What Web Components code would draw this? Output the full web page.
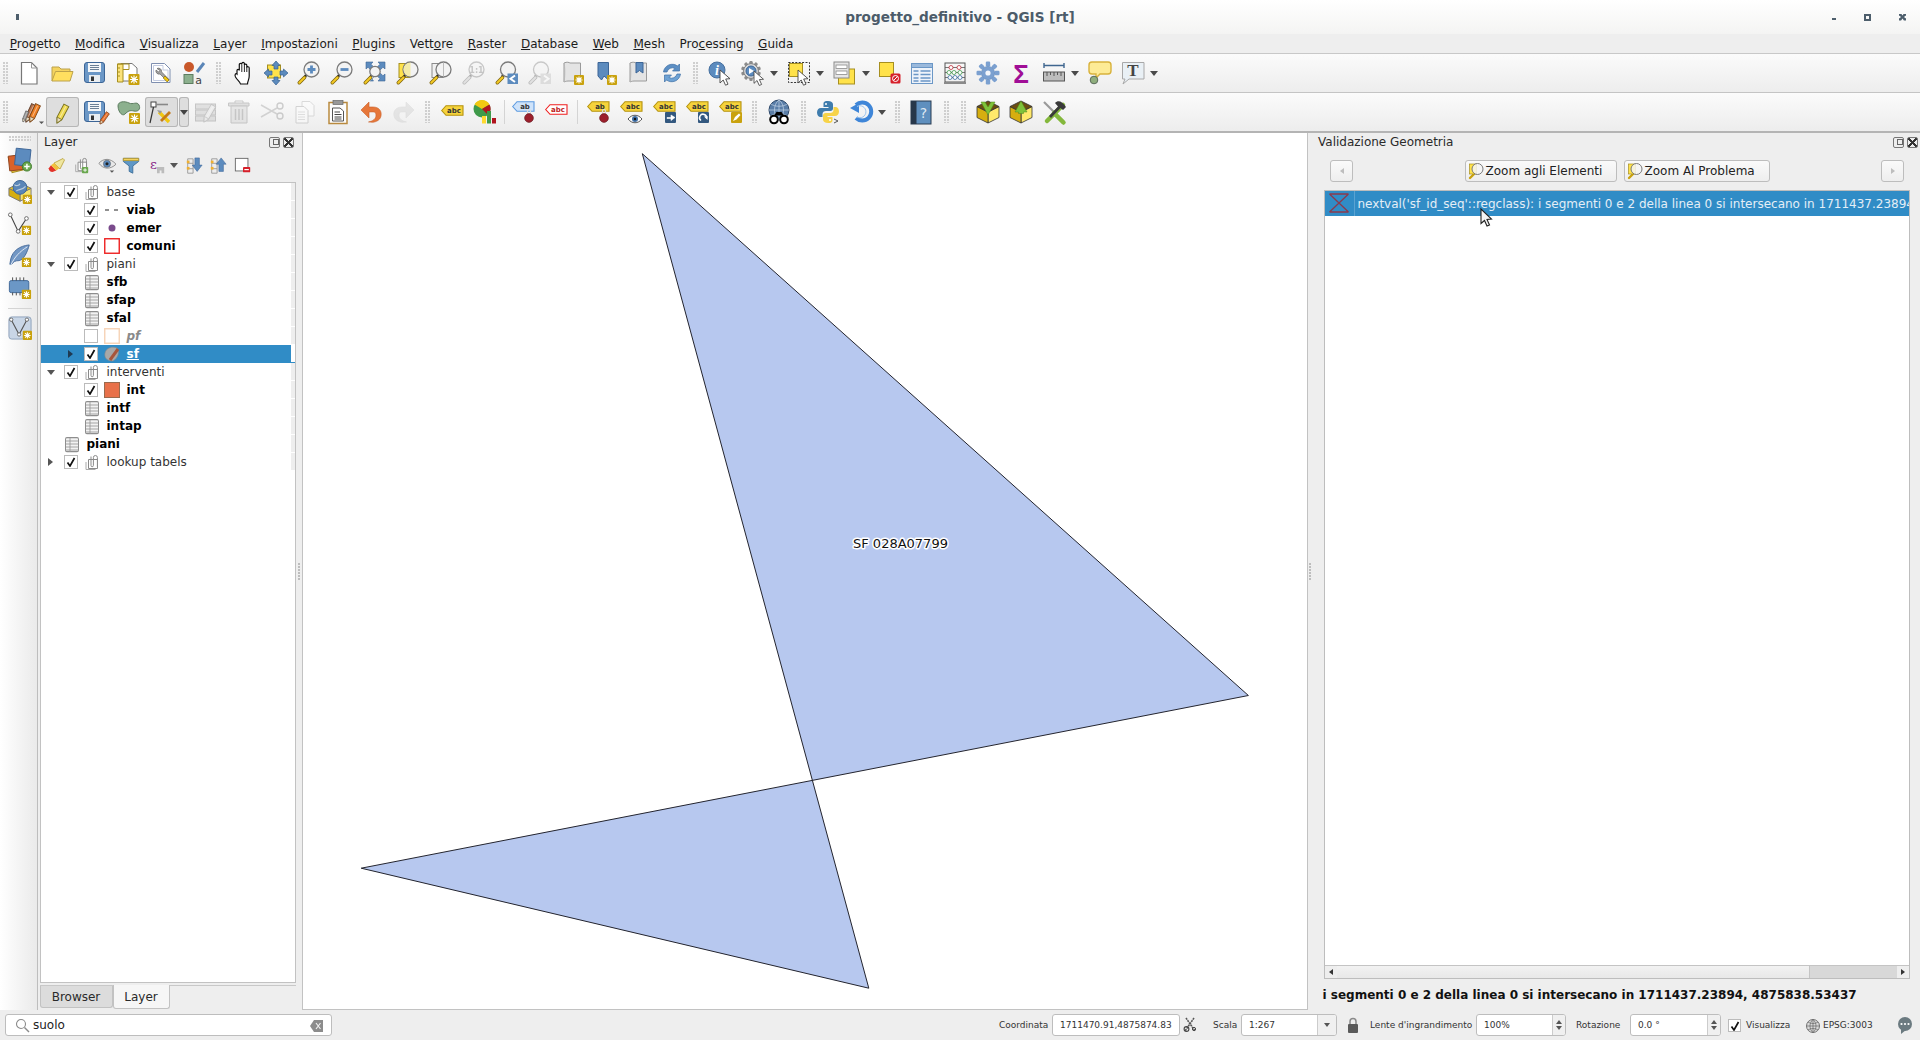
<!DOCTYPE html>
<html lang="it">
<head>
<meta charset="utf-8">
<title>progetto_definitivo - QGIS [rt]</title>
<style>
  html, body { margin: 0; padding: 0; background: #eee; overflow: hidden; }
  body { font: 12px "DejaVu Sans", sans-serif; color: #222; }
</style>
</head>
<body>
<qgis-app></qgis-app>
<script>
// icon parts
const B = 'fill="none"';
const badge = (x = 14, y = 14, s = 10) => {
  const c = s / 2;
  return `<g transform="translate(${x} ${y})"><rect width="${s}" height="${s}" rx="1" fill="#c9a20e"/>
    <g stroke="#fff" stroke-width="1.1"><path d="M${c} 1.5V${s - 1.5}M1.5 ${c}H${s - 1.5}M2.5 2.5L${s - 2.5} ${s - 2.5}M${s - 2.5} 2.5L2.5 ${s - 2.5}"/></g><circle cx="${c}" cy="${c}" r="1.7" fill="#fff"/></g>`;
};
const lens = (x = 14.5, y = 8.5, r = 7.5, inner = '', fill = '#f3f3f3') => `
  <path d="M${x - r * .7} ${y + r * .7}L7.5 16.5" stroke="#222" stroke-width="2.4"/>
  <path d="M7.5 16.5L2.3 21.7" stroke="#7d6510" stroke-width="3.6" stroke-linecap="round"/>
  <path d="M7.5 16.5L2.3 21.7" stroke="#f4c924" stroke-width="2" stroke-linecap="round"/>
  <circle cx="${x}" cy="${y}" r="${r}" fill="${fill}" stroke="#7b7b7b" stroke-width="1.3"/>${inner}`;
const cursor = (x, y, s = 1) => `<path transform="translate(${x} ${y}) scale(${s})" d="M0 0V13L3.2 10 5.5 15.2 8 14.2 5.7 9 10 8.7Z" fill="#fff" stroke="#444" stroke-width=".9"/>`;
const pencil = (x, y, a, col, dark, s = 1) => `<g transform="translate(${x} ${y}) rotate(${a}) scale(${s})"><path d="M-2.6 -19H2.6V-5L0 0-2.6-5Z" fill="${col}" stroke="${dark}" stroke-width=".9"/><path d="M-2.6 -5L0 0 2.6 -5Z" fill="#e8dcc0" stroke="${dark}" stroke-width=".7"/><path d="M0 -18V-6" stroke="#fff" stroke-opacity=".45"/></g>`;
const floppy = `<rect x="1.5" y="1.5" width="20" height="20" rx="2.5" fill="#6b97c6" stroke="#3c6596"/><rect x="5" y="2" width="13" height="9" fill="#f4f6f8"/><path d="M7 4.5h9M7 6.5h9M7 8.5h9" stroke="#6b7f95"/><rect x="6" y="14" width="11" height="7" fill="#e9edf1"/><rect x="8" y="15.5" width="3" height="4.5" fill="#333"/>`;
const tag = (col, line, txt, x = 0, y = 0, tc = '#333', w = 20) => `<g transform="translate(${x} ${y})"><path d="M.7 5.5L5 .7H${w}V10.3H5Z" fill="${col}" stroke="${line}" stroke-width="1.1"/><text x="${(w + 4) / 2}" y="8.3" text-anchor="middle" font-family="DejaVu Sans" font-weight="bold" font-size="7" fill="${tc}">${txt}</text></g>`;
const pin = (x, y) => `<path d="M${x - 1.5} ${y - 3}v-4a1.5 1.5 0 0 1 3 0v4" ${B} stroke="#ddd" stroke-width="1.2"/><circle cx="${x}" cy="${y}" r="4.4" fill="#9c1f2c" stroke="#5e121a" stroke-width=".6"/>`;
const scroll = (f = '#e4e4e4') => `<path d="M3 2c3-1.4 5-.6 6 0h10.5V20H7c-2 0-4 1-4 1Z" fill="${f}" stroke="#9a9a9a"/><path d="M3 2c1 3 1 15 0 19" ${B} stroke="#b8b8b8"/>`;
const gearTeeth = (cx, cy, r, n, w, col) => Array.from({ length: n }, (_, i) => `<rect x="${cx - w / 2}" y="${cy - r}" width="${w}" height="5" rx="1.2" fill="${col}" transform="rotate(${i * 360 / n} ${cx} ${cy})"/>`).join('');
const box = (head) => `<path d="M12 12L23 6.5V17.5L12 23Z" fill="#ffe96b" stroke="#333" stroke-width=".8"/><path d="M12 12L1 6.5V17.5L12 23Z" fill="#d6ae10" stroke="#333" stroke-width=".8"/><path d="M12 1L1 6.5 12 12 23 6.5Z" fill="#6b4d11" stroke="#333" stroke-width=".8"/>${head}`;
const groupIc = `<path d="M4.5 5.5h9v9h-9z" fill="#fff" stroke="#8a8a8a"/><path d="M7 2.5V11.5a1.2 1.2 0 0 0 2.4 0V3.5a2 2 0 0 1 4 0V13" ${B} stroke="#8a8a8a"/><path d="M2 8v7.5h9.5" ${B} stroke="#aaa"/>`;
const tableIc = `<rect x="1.5" y="1.5" width="13" height="13" rx="1.4" fill="#f2f2f2" stroke="#8e8e8e" transform="scale(1 1.08)"/><path d="M2 5h12M2 8h12M2 11h12M2 14h12M6 2v14" stroke="#9b9b9b" stroke-width=".9" ${B}/>`;

const ICONS = {
  new: `<path d="M4.5 1.5H14.5L20 7V23H4.5Z" fill="#fff" stroke="#777" stroke-width="1.2"/><path d="M14.5 1.5V7H20" ${B} stroke="#999"/>`,
  open: `<path d="M2 20V6h7l2 2h9v3" fill="#f4d35f" stroke="#bca24c"/><path d="M2 20L5.5 10.5H23L20 20Z" fill="#ffdf5f" stroke="#bca24c"/>`,
  save: floppy,
  layout: `<path d="M5 2.5H16L21 7V20H5Z" fill="#fff" stroke="#777"/><path d="M1.5 3H7V21H1.5Z" fill="#fbe27a" stroke="#a68f20"/><path d="M1.5 3H13V8.5H7" ${B} stroke="#a68f20"/><path d="M2 7h2M2 11h2M2 15h2" stroke="#a68f20"/>${badge(12.5, 13, 11)}`,
  manager: `<path d="M2.5 2.5H15.5L21 8V21.5H2.5Z" fill="#fff" stroke="#7f8fb0"/><path d="M4.5 4.5H14V9H19V19.5H4.5Z" ${B} stroke="#c3cbe0"/><path d="M8 7.5a3.2 3.2 0 0 1 4.6 3.4L20 18.5 18.5 20.5 11 13a3.2 3.2 0 0 1-4-4L9.5 11 11 9.5Z" fill="#a3a3a3" stroke="#555" stroke-width=".6"/><path d="M16 15l4 4-1.8 2-4-4Z" fill="#f2c811" stroke="#75600f" stroke-width=".6"/>`,
  style: `<circle cx="7" cy="6" r="5" fill="#c9582a"/><path d="M15 11L22 2" stroke="#5b86b8" stroke-width="3"/><rect x="2" y="13.5" width="9" height="9" fill="#8cb08e" stroke="#5d7d60"/><text x="16.5" y="22.5" text-anchor="middle" font-family="DejaVu Sans" font-size="11" fill="#444">a</text>`,
  pan: `<path d="M6 13V9.5C6 8 8 8 8.3 9.5V3.6C8.3 2 10.6 2 10.8 3.6V2.6C11 1 13.2 1 13.4 2.6V4C13.6 2.6 15.8 2.8 15.8 4.3V6.5C16 5.3 18.2 5.5 18.2 7V15C18.2 19 16.5 20 16.5 23H9.5C9 20.5 6.5 19.5 4.5 16 3.2 13.5 5 12 6 13Z" fill="#fff" stroke="#111" stroke-width="1.2"/><path d="M10.8 4V11M13.4 4V11M15.8 6V11" stroke="#111" stroke-width=".9"/>`,
  panto: `<rect x="3.5" y="4" width="13" height="13" fill="#ffe24a" stroke="#a68f20"/><g fill="#5c8bbe" stroke="#38618f" stroke-width=".7"><path d="M12 0L16 4.5H14V8H10V4.5H8Z"/><path d="M12 24L16 19.5H14V16H10V19.5H8Z"/><path d="M0 12L4.5 8V10H8V14H4.5V16Z"/><path d="M24 12L19.5 8V10H16V14H19.5V16Z"/></g>`,
  zoomin: lens(14.5, 8.5, 7.5, `<path d="M14.5 4.5V12.5M10.5 8.5H18.5" stroke="#5c8bbe" stroke-width="2.8"/>`),
  zoomout: lens(14.5, 8.5, 7.5, `<path d="M10.5 8.5H18.5" stroke="#5c8bbe" stroke-width="2.8"/>`),
  zoomfull: `<g fill="#5c8bbe" stroke="#3c6596" stroke-width=".6"><path d="M3 1H10L8 3.2 10.5 5.7 7.5 8.7 5 6.2 3 8Z"/><path d="M22 1H15L17 3.2 14.5 5.7 17.5 8.7 20 6.2 22 8Z"/><path d="M22 20H15L17 17.8 14.5 15.3 17.5 12.3 20 14.8 22 13Z"/><path d="M7 20H10.5L9 18 11 15.8"/></g>` + lens(12, 10.5, 5.2, '', '#f3f3f3'),
  zoomlayer: `<rect x="3" y="2.5" width="11" height="14" fill="#ffe24a" stroke="#a68f20"/>` + lens(14.5, 8.5, 7.5, `<path d="M14.5 1.5A7 7 0 0 0 14.5 15.5Z" fill="#f3eba8"/>`, '#f3f3f3'),
  zoomsel: `<rect x="3" y="2.5" width="11" height="14" fill="#f1f1f1" stroke="#8a8a8a"/>` + lens(14.5, 8.5, 7.5, `<path d="M14.5 1.5V15.5" stroke="#bbb"/>`, '#f3f3f3'),
  zoom11: lens(14.5, 8.5, 7.5, `<text x="14.5" y="11.6" text-anchor="middle" font-family="DejaVu Sans" font-weight="bold" font-size="8" fill="#777">1:1</text>`),
  zoomlast: lens(13, 8.5, 7.5) + `<rect x="12.5" y="12.5" width="10.5" height="10.5" fill="#5c8bbe"/><path d="M20 14.5L15.5 17.8 20 21" ${B} stroke="#fff" stroke-width="2"/>`,
  zoomnext: lens(13, 8.5, 7.5) + `<rect x="12.5" y="12.5" width="10.5" height="10.5" fill="#bbb"/><path d="M16 14.5L20.5 17.8 16 21" ${B} stroke="#fff" stroke-width="2"/>`,
  newmap: scroll() + badge(13, 14, 10),
  bookmark: `<path d="M4 1.5H14.5V19L10 15 7.5 19 4 15Z" fill="#5c8bbe" stroke="#3c6596"/>` + badge(13, 14, 10),
  showbm: scroll() + `<path d="M9 1.5H16V12L12.5 9.5 9 12Z" fill="#5c8bbe" stroke="#3c6596"/>`,
  refresh: `<path d="M3.5 11A8.8 8.8 0 0 1 17.5 5L19.5 3V10H12.5L15 7.5A5.5 5.5 0 0 0 7 11Z" fill="#5c8fc4" stroke="#3c6ea5" stroke-width=".7"/><path d="M20.5 13A8.8 8.8 0 0 1 6.5 19L4.5 21V14H11.5L9 16.5A5.5 5.5 0 0 0 17 13Z" fill="#6ea2d4" stroke="#3c6ea5" stroke-width=".7"/>`,
  identify: `<circle cx="9" cy="9" r="8" fill="#5c8bbe" stroke="#46709f"/><text x="9" y="14" text-anchor="middle" font-family="Liberation Serif" font-style="italic" font-weight="bold" font-size="14" fill="#fff">i</text>` + cursor(12, 9),
  action: gearTeeth(10, 10, 10, 10, 3.4, '#8c8c8c') + `<circle cx="10" cy="10" r="7.4" fill="#d9d9d9" stroke="#808080"/><circle cx="10" cy="10" r="5" fill="#5c8bbe" stroke="#3c6596"/><path d="M8 7L13 10 8 13Z" fill="#fff"/>` + cursor(13, 10, .95),
  select: `<rect x="1.5" y="1.5" width="21" height="20" ${B} stroke="#333" stroke-dasharray="2 1.4"/><rect x="2.5" y="2.5" width="13" height="13" fill="#ffe24a" stroke="#a68f20"/>` + cursor(11, 9),
  selattr: `<rect x="5.5" y="8" width="16" height="15" fill="#ffe24a" stroke="#a68f20"/><rect x="1" y="1" width="15" height="16" fill="#e6e6e6" stroke="#8a8a8a"/><rect x="3" y="4" width="11" height="3.5" fill="#fff" stroke="#8a8a8a" stroke-width=".8"/><rect x="3" y="10" width="11" height="3.5" fill="#fff" stroke="#8a8a8a" stroke-width=".8"/>`,
  deselect: `<rect x="1.5" y="1.5" width="14" height="14" fill="#ffe24a" stroke="#a68f20"/><rect x="12.5" y="12.5" width="10" height="10" rx="1.5" fill="#d6202b"/><circle cx="17.5" cy="17.5" r="3" ${B} stroke="#fff"/><path d="M15.5 19.5L19.5 15.5" stroke="#fff"/>`,
  table: `<rect x="1.5" y="2.5" width="21" height="20" fill="#eef3fa" stroke="#6b97c6"/><rect x="1.5" y="2.5" width="21" height="4" fill="#9ab9dc" stroke="#6b97c6"/><path d="M3.5 10h5M10.5 10h10M3.5 13.5h5M10.5 13.5h10M3.5 17h5M10.5 17h10M3.5 20h5M10.5 20h10" stroke="#6b97c6" stroke-width="1.3"/>`,
  abacus: `<rect x="2" y="2" width="20" height="19" ${B} stroke="#555"/><rect x="1" y="21" width="22" height="2" fill="#8a8a8a"/><path d="M2 6.5H22M2 11.5H22M2 16.5H22" stroke="#555" stroke-width=".8"/><g stroke-width=".8" fill="#fff"><circle cx="8" cy="6.5" r="2" stroke="#c0303a"/><circle cx="16" cy="6.5" r="2" stroke="#c0303a"/><circle cx="6" cy="11.5" r="2" stroke="#3f9a4a"/><circle cx="11" cy="11.5" r="2" stroke="#3f9a4a"/><circle cx="17" cy="11.5" r="2" stroke="#3f9a4a"/><circle cx="7" cy="16.5" r="2" stroke="#3c6ea5"/><circle cx="12" cy="16.5" r="2" stroke="#3c6ea5"/><circle cx="17" cy="16.5" r="2" stroke="#3c6ea5"/></g>`,
  gear: gearTeeth(12, 12, 11.5, 8, 4.4, '#7ba0d0') + `<circle cx="12" cy="12" r="6.6" fill="#7ba0d0" stroke="#5f88bb" stroke-width=".6"/><circle cx="12" cy="12" r="2.6" fill="#f3f6fb"/>`,
  sigma: `<text x="12" y="22" text-anchor="middle" font-family="Liberation Sans" font-weight="bold" font-size="26" fill="#a00e96">Σ</text>`,
  ruler: `<path d="M2 4.5H22M2 2V7M22 2V7" stroke="#3f668f" stroke-width="1.4"/><rect x="1.5" y="11" width="21" height="9" fill="#bdbdbd" stroke="#555"/><path d="M5 11v4M8.5 11v3M12 11v4M15.5 11v3M19 11v4" stroke="#555"/>`,
  annot: `<path d="M4 1H20C22 1 23 2 23 4V10C23 12 22 13 20 13H12L8 17V13H4C2 13 1 12 1 10V4C1 2 2 1 4 1Z" fill="#fdeb96" stroke="#d8b23c" stroke-width="1.4"/><circle cx="6" cy="19" r="3.8" fill="#8fae7d" stroke="#5a6b5a"/>`,
  ttext: `<path d="M1.5 1.5H23V18H8L2 23 4 18H1.5Z" fill="#e9f0f5" stroke="#a8a8a8"/><text x="12" y="14.5" text-anchor="middle" font-family="Liberation Serif" font-weight="bold" font-size="17" fill="#444">T</text>`,
  pencils: pencil(9, 22, 25, '#b5704a', '#5c3a26') + pencil(13, 22, 25, '#ef7f22', '#7a4213') + pencil(6, 22, 22, '#9a9a9a', '#555', .6) + `<path d="M22 21.5h5l-2.5 2.5Z" fill="#555"/>`,
  pencil: pencil(7, 23, 28, '#efd94f', '#77701f', 1.05),
  saveedits: floppy + pencil(17, 24, 35, '#e9702a', '#7a3a13', .72),
  addpoly: `<path d="M2 6C2 1 9 1 13 3S21 1 23 5 22 12 18 11 12 11 9 14 2 11 2 6Z" fill="#8cb08e" stroke="#5d7d60"/>` + badge(13, 13, 11),
  vertex: `<rect x="2" y="2" width="5" height="5" fill="#fff" stroke="#444"/><path d="M7 4.5H19" stroke="#888" stroke-width="1.6"/><path d="M4.5 7L1 23" stroke="#333" stroke-width="1.2"/><path d="M10 12L20 22" stroke="#f2c811" stroke-width="3.4"/><path d="M12 21L21 12" stroke="#c47b1a" stroke-width="2.8"/><path d="M8 10l5 1-2 3Z" fill="#999"/>`,
  modattr: `<rect x="1.5" y="4" width="20" height="5" fill="#bcbcbc" stroke="#777"/><rect x="1.5" y="10" width="20" height="5" fill="#bcbcbc" stroke="#777"/><rect x="1.5" y="16" width="20" height="5" fill="#bcbcbc" stroke="#777"/>` + pencil(10, 22, 30, '#ddd', '#777'),
  del: `<path d="M1.5 3H22V6H1.5Z" fill="#c9b5b5" stroke="#8b7777"/><path d="M8 3V1H16V3" ${B} stroke="#8b7777"/><path d="M4 6H20V23H4Z" fill="#d8c8c8" stroke="#8b7777"/><path d="M8.5 9V20M12 9V20M15.5 9V20" stroke="#8b7777" stroke-width="1.5"/>`,
  cut: `<path d="M1 5L17 14M1 17L17 8" stroke="#999" stroke-width="1.5"/><circle cx="20" cy="16" r="3" ${B} stroke="#888" stroke-width="1.4"/><circle cx="20" cy="6" r="3" ${B} stroke="#888" stroke-width="1.4"/>`,
  copy: `<path d="M9 1.5H17L21 5.5V16H9Z" fill="#fff" stroke="#aaa"/><path d="M3 6.5H11L15 10.5V23H3Z" fill="#fff" stroke="#999"/><path d="M5 12h7M5 14.5h7M5 17h7M5 19.5h7" stroke="#bbb"/>`,
  paste: `<rect x="3" y="2.5" width="18" height="21" fill="#fdfdfd" stroke="#b98a3f" stroke-width="1.5"/><rect x="7" y="0.5" width="10" height="4" fill="#999" stroke="#666" stroke-width=".7"/><path d="M6.5 8H14L17.5 11V21H6.5Z" fill="#fff" stroke="#555"/><path d="M8.5 12H14M8.5 14.5H15.5M8.5 17H15.5M8.5 19H15.5" stroke="#444"/>`,
  undo: `<path d="M2 10L10 2V7H14C20 7 23 11 22 16S15 23 11 22L9.5 22C14 21 17 19 17 15S14 12 10 12V18Z" fill="#e6773a" stroke="#c9602a" stroke-width=".6"/>`,
  redo: `<path d="M22 10L14 2V7H10C4 7 1 11 2 16S9 23 13 22L14.5 22C10 21 7 19 7 15S10 12 14 12V18Z" fill="#c9c9c9" stroke="#bbb" stroke-width=".6"/>`,
  abc: tag('#f6d33c', '#b5930f', 'abc', 1, 5, '#333', 22),
  diagram: `<circle cx="9" cy="9" r="8.5" fill="#3f9a4a"/><path d="M9 9L1.5 4.5A8.5 8.5 0 0 1 16.5 4.5Z" fill="#f2c811"/><path d="M9 9L16.5 4.5A8.5 8.5 0 0 1 15 15Z" fill="#b0141e"/><rect x="9" y="16" width="4" height="7.5" fill="#ffd92f"/><rect x="14" y="11" width="4" height="12.5" fill="#3f9a4a"/><rect x="19" y="18" width="4" height="5.5" fill="#b0141e"/>`,
  abpin: tag('#cfe3fa', '#5c9ae0', 'ab', 1, 1, '#333', 22) + pin(18, 18),
  abcred: tag('#fff', '#ef1f1f', 'abc', 1, 4, '#c01a1a', 22),
  abpiny: tag('#f6d33c', '#b5930f', 'ab', 1, 1, '#333', 22) + pin(18, 18),
  abceye: tag('#f6d33c', '#b5930f', 'abc', 1, 1, '#333', 22) + `<path d="M9 19C13 14 19 14 23 19 19 24 13 24 9 19Z" fill="#fff" stroke="#555"/><circle cx="16" cy="19" r="3" fill="#3f6ea5"/><circle cx="16" cy="19" r="1.2" fill="#111"/>`,
  abcarrow: tag('#f6d33c', '#b5930f', 'abc', 1, 1, '#333', 22) + `<rect x="13" y="12" width="11" height="11" rx="1" fill="#33587f"/><path d="M15 17.5H19V15L23 17.5 19 20.5V18.5H15Z" fill="#fff" stroke="#fff" stroke-width=".6"/>`,
  abcrotate: tag('#f6d33c', '#b5930f', 'abc', 1, 1, '#333', 22) + `<rect x="13" y="12" width="11" height="11" rx="1" fill="#33587f"/><path d="M16 20.5A3.5 3.5 0 1 1 21.5 18.5" ${B} stroke="#fff" stroke-width="1.5"/><path d="M19 16.5L22.5 20 22.5 16Z" fill="#fff"/>`,
  abcpen: tag('#f6d33c', '#b5930f', 'abc', 1, 1, '#333', 22) + `<rect x="13" y="12" width="11" height="11" rx="1" fill="#c9a20e"/><path d="M15 21L17 17 21 13.5 22.5 15 18.5 19.5Z" fill="#fff"/>`,
  globe: `<circle cx="12" cy="10" r="10" fill="#5a7ea8" stroke="#2f4a6b"/><path d="M2 10H22M12 0V20M4 4C8 7 16 7 20 4M4 16C8 13 16 13 20 16M12 0C6 4 6 16 12 20M12 0C18 4 18 16 12 20" ${B} stroke="#b9cbe0" stroke-width=".8"/><circle cx="7" cy="19.5" r="3.8" fill="#fff" stroke="#000" stroke-width="2"/><circle cx="17" cy="19.5" r="3.8" fill="#fff" stroke="#000" stroke-width="2"/><path d="M7 15.5L9.5 12H14.5L17 15.5Z" fill="#000"/>`,
  python: `<path d="M12 1C7 1 7.5 3 7.5 5V7H12.5V8H5C2.5 8 1 10 1 12.5S2.5 17 4.5 17H6.5V14C6.5 12 8 11 10 11H14.5C16 11 17 10 17 8.5V4.5C17 2.5 15 1 12 1Z" fill="#3f7cad"/><circle cx="10" cy="4" r="1" fill="#fff"/><path d="M12 23C17 23 16.5 21 16.5 19V17H11.5V16H19C21.5 16 23 14 23 11.5S21.5 7 19.5 7H17.5V10C17.5 12 16 13 14 13H9.5C8 13 7 14 7 15.5V19.5C7 21.5 9 23 12 23Z" fill="#f7d348"/><circle cx="14" cy="20" r="1" fill="#fff"/><path d="M18 19L22 21 18 23" ${B} stroke="#555"/>`,
  reload: `<path d="M7 18A9 9 0 1 0 7 5" ${B} stroke="#3f86d8" stroke-width="4"/><path d="M1 8L10 3 10 13Z" fill="#3f86d8"/><path d="M8 6.5A6 6 0 1 1 8 17" ${B} stroke="#9cc4ee" stroke-width="1"/>`,
  help: `<rect x="1" y="1" width="20" height="23" fill="#5f8fbe" stroke="#2b3d52"/><rect x="1" y="1" width="5.5" height="23" fill="#27374a"/><text x="13.5" y="17.5" text-anchor="middle" font-family="DejaVu Sans" font-size="14" fill="#dfe8f2">?</text>`,
  boxdown: box(`<path d="M5 2H9L12 7 15 2H19L12 15Z" fill="#7fc23a" stroke="#4f8a1e" stroke-width=".5"/>`),
  boxup: box(`<path d="M12 1L18 12H14.5V13.5H9.5V12H6Z" fill="#7fc23a" stroke="#4f8a1e" stroke-width=".5"/>`),
  tools: `<path d="M2 2L21 21" stroke="#9a9a9a" stroke-width="2.2"/><path d="M21 5L5 21" stroke="#84b83c" stroke-width="4.5" stroke-linecap="round"/><path d="M12 13L21.5 22.5" stroke="#84b83c" stroke-width="4.5" stroke-linecap="round"/><path d="M13 3C16 0 20 1 24 7L21 10 18.5 8 9 18 7 16 16 6.5Z" fill="#3a3a3a"/>`,
  addlayers: `<rect x="2" y="8" width="17" height="17" fill="#f2c13c" stroke="#a68f20" transform="rotate(-14 10 16)"/><rect x="1" y="8" width="16" height="16" fill="#d9622b" stroke="#8f4520" transform="rotate(-6 9 16)"/><rect x="8" y="1" width="16" height="18" fill="#5c8bbe" stroke="#3c6596" transform="rotate(6 16 10)"/><circle cx="20.5" cy="20" r="5" fill="#6aa84f" stroke="#3f7a2a"/><path d="M20.5 17V23M17.5 20H23.5" stroke="#fff" stroke-width="1.6"/>`,
  newgpkg: `<path d="M13 23L25 17V9L13 15Z" fill="#f7e36b" stroke="#777"/><path d="M13 23L1 17V9L13 15Z" fill="#d6ae10" stroke="#777"/><path d="M13 15L1 9 13 3 25 9Z" fill="#e8c428" stroke="#777"/><circle cx="13" cy="8" r="7.5" fill="#5a86b8" stroke="#3c6596"/><path d="M7 5C9 7 12 6 13 4M9 12C11 10 16 11 19 7" ${B} stroke="#bcd" stroke-width="1.3"/>` + badge(16, 16, 10),
  newvector: `<path d="M2.5 3L11 21 20 7" ${B} stroke="#444" stroke-width="1.2"/><circle cx="2.5" cy="3" r="2" fill="#fff" stroke="#666"/><circle cx="11" cy="21" r="2" fill="#fff" stroke="#666"/><circle cx="20" cy="7" r="2" fill="#fff" stroke="#666"/>` + badge(15, 15, 10),
  feather: `<path d="M23 1C12 2 5 8 3 16L2 22 4 22C6 19 8 18 12 18 17 17 21 9 23 1Z" fill="#7297c4" stroke="#44699a"/><path d="M3 23C7 14 13 8 21 3" ${B} stroke="#e8eef6"/>` + badge(15, 15, 10),
  memory: `<rect x="1.5" y="5" width="21" height="13" rx="2" fill="#6b97c6" stroke="#3c6596"/><path d="M5 1.5V5M9 1.5V5M13 1.5V5M17 1.5V5M5 18V21M9 18V21M13 18V21" stroke="#444"/>` + badge(15, 15, 10),
  virtual: `<rect x="1" y="1" width="24" height="24" rx="3" fill="#c9d6e6" stroke="#8ba0b8"/><path d="M3.5 4L12 20 20.5 4" ${B} stroke="#555" stroke-width="1.2"/><circle cx="12" cy="20" r="1.8" fill="#fff" stroke="#666"/><circle cx="3.5" cy="4" r="1.8" fill="#fff" stroke="#666"/><circle cx="20.5" cy="4" r="1.8" fill="#fff" stroke="#666"/>` + badge(16, 16, 10),
  brush: `<path d="M4 11L11 18 6 20C3 20 1 18 1 15Z" fill="#e2332a"/><path d="M8 8L20 2 22 4 16 16Z" fill="#efe6a0" stroke="#b39a2c"/><path d="M4 11L8 8 15 15 11 18Z" fill="#f2c13c"/>`,
  addgroup: `<g transform="translate(2 0) scale(1.05)">${groupIc}</g>` + `<rect x="11" y="11" width="7" height="7" rx="1" fill="#6aa84f"/><path d="M14.5 12.5V16.5M12.5 14.5H16.5" stroke="#fff"/>`,
  eye: `<path d="M1 7C6 1 14 1 20 8 14 14 6 14 1 7Z" fill="#e8e8e8" stroke="#888"/><circle cx="10" cy="7.5" r="4" fill="#5c8bbe" stroke="#555" stroke-width=".6"/><circle cx="10" cy="7.5" r="1.7" fill="#222"/><path d="M13 15h5l-2.5 2.5Z" fill="#555"/>`,
  filter: `<path d="M1.5 1.5H18.5V5L12 10V18L8 16V10L1.5 5Z" fill="#5f97c6" stroke="#3c6e9a"/><path d="M1.5 1.5H18.5V4H1.5Z" fill="#f4d35f" stroke="#b59a30"/>`,
  epsilon: `<text x="6" y="13" text-anchor="middle" font-family="DejaVu Serif" font-size="15" fill="#8b2a88">ε</text><path d="M10 11H18V18H15V15H13V18H10Z" fill="#bcbcbc"/>`,
  expand: `<path d="M3 2H9V18H3ZM3 7H9M3 13H9" ${B} stroke="#999"/><rect x="2" y="4" width="3" height="3" fill="#f0b030"/><rect x="2" y="11" width="3" height="3" fill="#f0b030"/><path d="M11 1H16V9H19L13.5 16 8 9H11Z" fill="#5c8bbe" stroke="#3c6596" stroke-width=".6"/>`,
  collapse: `<path d="M3 2H9V18H3ZM3 7H9M3 13H9" ${B} stroke="#999"/><rect x="2" y="4" width="3" height="3" fill="#f0b030"/><rect x="2" y="11" width="3" height="3" fill="#f0b030"/><path d="M11 16H16V8H19L13.5 1 8 8H11Z" fill="#5c8bbe" stroke="#3c6596" stroke-width=".6"/>`,
  removelayer: `<rect x="1.5" y="1.5" width="14" height="14" fill="#fff" stroke="#666"/><rect x="10" y="11" width="8" height="6" rx="1" fill="#d6202b"/><path d="M11.5 14H16.5" stroke="#fff" stroke-width="1.3"/>`,
  group: groupIc,
  layertable: tableIc,
  dash: `<path d="M1 8H5M10 8H14" stroke="#222" stroke-width="1.2"/>`,
  dot: `<circle cx="8" cy="8" r="3.5" fill="#7a4b8c"/>`,
  squarered: `<rect x=".75" y=".75" width="14.5" height="14.5" fill="#fff" stroke="#ee2222" stroke-width="1.4"/>`,
  squarepale: `<rect x=".75" y=".75" width="14.5" height="14.5" fill="#fff" stroke="#f6d3b6" stroke-width="1.4"/>`,
  squareorange: `<rect x=".5" y=".5" width="15" height="15" fill="#e8714a" stroke="#9a6a4e"/>`,
  rulebased: `<path d="M1 7C2 2 8 0 13 2 16 6 14 12 9 15 3 15 0 12 1 7Z" fill="#a8a8a8" stroke="#888" stroke-width=".6"/><path d="M6 14L14 3" stroke="#a8553a" stroke-width="3"/>`,
  magsmall: `<circle cx="6" cy="6" r="4.5" ${B} stroke="#8a8a8a" stroke-width="1.1"/><path d="M9.5 9.5L14 14" stroke="#8a8a8a" stroke-width="1.4"/>`,
  clear: `<path d="M0 6L4 0H13V12H4Z" fill="#8c8c8c"/><path d="M6 3L10.5 9M10.5 3L6 9" stroke="#eee" stroke-width="1.2"/>`,
  mag16: `<path d="M2 15L6 11" stroke="#c9a20e" stroke-width="2.4" stroke-linecap="round"/><rect x="1.5" y="1" width="7" height="10" fill="#ffe24a" stroke="#a68f20" stroke-width=".7"/><circle cx="9.5" cy="6" r="5.5" fill="#f5f5f5" fill-opacity=".85" stroke="#7b7b7b"/>`,
  render: `<path d="M4 2L13 15M12 2L3 15" stroke="#555" stroke-width="1.6" stroke-dasharray="2 .7"/><circle cx="4.5" cy="13" r="2.4" ${B} stroke="#444" stroke-width="1.1"/><circle cx="12" cy="13" r="1.6" ${B} stroke="#444" stroke-width="1"/>`,
  lock: `<path d="M3 7V4.5A3 3 0 0 1 9 4.5V7" ${B} stroke="#8a8a8a" stroke-width="1.5"/><rect x="1" y="7" width="10" height="9" rx="1" fill="#5a5a5a"/>`,
  epsg: `<circle cx="8" cy="8" r="6.5" fill="#d9d9d9" stroke="#666" stroke-width=".9"/><path d="M1.5 8H14.5M8 1.5V14.5M3 4C6 6 10 6 13 4M3 12C6 10 10 10 13 12M8 1.5C4 5 4 11 8 14.5M8 1.5C12 5 12 11 8 14.5" ${B} stroke="#666" stroke-width=".7"/>`,
  msg: `<circle cx="8" cy="7" r="7" fill="#6b7a80"/><path d="M4 12L4 17 9 13Z" fill="#6b7a80"/><circle cx="4.5" cy="7" r="1.1" fill="#fff"/><circle cx="8" cy="7" r="1.1" fill="#fff"/><circle cx="11.5" cy="7" r="1.1" fill="#fff"/>`,
  hourglass: `<path d="M2.5 2H21.5M2.5 20H21.5M2.5 2L21.5 20M21.5 2L2.5 20" ${B} stroke="#8a3a4e" stroke-width="1.3"/>`,
};

class QIcon extends HTMLElement {
  connectedCallback() {
    if (this.shadowRoot) return;
    const s = +(this.getAttribute('size') || 24);
    const vb = +(this.getAttribute('vb') || s);
    this.attachShadow({ mode: 'open' }).innerHTML = `
      <style>:host { display: block; width: ${s}px; height: ${s}px; flex: none; line-height: 0; } svg { overflow: visible; }</style>
      <svg width="${s}" height="${s}" viewBox="0 0 ${vb} ${vb}">${ICONS[this.getAttribute('name')] || ''}</svg>`;
  }
}
customElements.define('q-icon', QIcon);

const titleT = document.createElement('template');
titleT.innerHTML = `
<style>
  :host { display: flex; align-items: center; justify-content: center; position: relative; height: 34px; flex: none;
    background: linear-gradient(#ffffff, #f4f4f3); color: #4c5c6a; font: bold 13.6px "DejaVu Sans", sans-serif; }
  .app { position: absolute; left: 16px; top: 14px; width: 3px; height: 6px; background: #4d5e6c; }
  .ctl { position: absolute; top: 0; right: 14px; height: 34px; display: flex; align-items: center; gap: 28px; }
  .min { width: 4px; height: 2px; background: #4d5e6c; margin-top: 4px; }
  .max { width: 3px; height: 3px; border: 2px solid #4d5e6c; }
  .cls { width: 7px; height: 7px; background: #4d5e6c; clip-path: polygon(0 0,30% 0,50% 30%,70% 0,100% 0,100% 30%,70% 50%,100% 70%,100% 100%,70% 100%,50% 70%,30% 100%,0 100%,0 70%,30% 50%,0 30%); }
</style>
<span class="app"></span><span><slot></slot></span>
<div class="ctl"><span class="min"></span><span class="max"></span><span class="cls"></span></div>`;
class QTitlebar extends HTMLElement {
  constructor() { super(); this.attachShadow({ mode: 'open' }).appendChild(titleT.content.cloneNode(true)); }
}
customElements.define('q-titlebar', QTitlebar);

const menuT = document.createElement('template');
menuT.innerHTML = `
<style>
  :host { display: flex; align-items: center; height: 19px; flex: none; padding-left: 2.5px; background: #eeeeee; border-bottom: 1px solid #c8c8c8; }
</style><slot></slot>`;
class QMenubar extends HTMLElement {
  constructor() { super(); this.attachShadow({ mode: 'open' }).appendChild(menuT.content.cloneNode(true)); }
}
customElements.define('q-menubar', QMenubar);

const menuItemT = document.createElement('template');
menuItemT.innerHTML = `<style>:host { display: block; padding: 0 7.25px; font: 12px "DejaVu Sans", sans-serif; color: #1c1c1c; white-space: nowrap; }</style><slot></slot>`;
class QMenuItem extends HTMLElement {
  constructor() { super(); this.attachShadow({ mode: 'open' }).appendChild(menuItemT.content.cloneNode(true)); }
}
customElements.define('q-menu-item', QMenuItem);

const tbT = document.createElement('template');
tbT.innerHTML = `
<style>
  :host { display: flex; align-items: center; height: 38px; flex: none; background: linear-gradient(#fbfbfb, #ededed); border-bottom: 1px solid #c4c4c4; }
  :host([last]) { border-bottom: 2px solid #b4b4b4; }
</style><slot></slot>`;
class QToolbar extends HTMLElement {
  constructor() { super(); this.attachShadow({ mode: 'open' }).appendChild(tbT.content.cloneNode(true)); }
}
customElements.define('q-toolbar', QToolbar);

class QBtn extends HTMLElement {
  connectedCallback() {
    if (this.shadowRoot) return;
    const dd = this.hasAttribute('dd');
    const size = this.getAttribute('size') || 24;
    const w = +(this.getAttribute('w') || 33);
    this.attachShadow({ mode: 'open' }).innerHTML = `
      <style>
        :host { display: flex; align-items: center; flex: none; width: ${w}px; height: 30px; padding-left: ${(w - size) / 2}px; box-sizing: border-box; position: relative; }
        :host([dd]) { width: 46px; padding-left: 4.5px; }
        :host([pressed]) { background: #dedede; box-shadow: inset 0 0 0 1px #b6b6b6; border-radius: 3px; }
        :host([disabled]) q-icon { filter: grayscale(1) opacity(.38); }
        .tri { width: 0; height: 0; border: 4px solid transparent; border-top: 5px solid #4a4a4a; border-bottom: 0; margin-left: 5px; }
      </style>
      <q-icon name="${this.getAttribute('icon')}" size="${size}" vb="24"></q-icon>${dd ? '<span class="tri"></span>' : ''}`;
  }
}
customElements.define('q-btn', QBtn);

const ddT = document.createElement('template');
ddT.innerHTML = `<style>
  :host { display: flex; align-items: center; justify-content: center; width: 10px; height: 30px; flex: none; background: #dedede; box-shadow: inset 0 0 0 1px #b6b6b6; border-radius: 3px; margin-left: 1px; }
  span { border: 4px solid transparent; border-top: 5px solid #444; border-bottom: 0; }
</style><span></span>`;
class QDdButton extends HTMLElement {
  constructor() { super(); this.attachShadow({ mode: 'open' }).appendChild(ddT.content.cloneNode(true)); }
}
customElements.define('q-dd-button', QDdButton);

class QHandle extends HTMLElement {
  connectedCallback() {
    if (this.shadowRoot) return;
    const w = this.getAttribute('w') || 15;
    this.attachShadow({ mode: 'open' }).innerHTML = `<style>
      :host { display: flex; align-items: center; justify-content: center; flex: none; width: ${w}px; }
      i { display: ${w < 5 ? 'none' : 'block'}; width: 6px; height: 22px; background: radial-gradient(circle at 1px 1px, #cfcfcf .9px, transparent 1px) 0 0 / 3px 3px; }
    </style><i></i>`;
  }
}
customElements.define('q-handle', QHandle);

class QSep extends HTMLElement {
  connectedCallback() {
    if (this.shadowRoot) return;
    const horiz = this.hasAttribute('horizontal');
    this.attachShadow({ mode: 'open' }).innerHTML = `<style>
      :host { display: flex; align-items: center; justify-content: center; flex: none; width: ${horiz ? '24px' : (this.getAttribute('w') || 5) + 'px'}; ${horiz ? 'height: 1px; margin-bottom: 7px;' : ''} }
      i { display: block; width: ${horiz ? '24px' : '1px'}; height: ${horiz ? '1px' : '24px'}; background: #d4d4d4; }
    </style><i></i>`;
  }
}
customElements.define('q-sep', QSep);

const sideT = document.createElement('template');
sideT.innerHTML = `
<style>
  :host { display: flex; flex-direction: column; align-items: center; width: 37px; flex: none; box-sizing: content-box; border-right: 1px solid #bdbdbd; padding-top: 1px; background: linear-gradient(90deg, #fff, #eaeaea); }
  .grip { width: 22px; height: 5px; margin: 2px 0 7px 3px; background: radial-gradient(circle at 1px 1px, #cfcfcf .9px, transparent 1px) 0 0 / 3px 3px; }
  ::slotted(q-icon) { margin: 0 0 8px 3px; }
  ::slotted(q-sep) { margin-left: 3px; }
</style>
<div class="grip"></div><slot></slot>`;
class QSideToolbar extends HTMLElement {
  constructor() { super(); this.attachShadow({ mode: 'open' }).appendChild(sideT.content.cloneNode(true)); }
}
customElements.define('q-side-toolbar', QSideToolbar);

const dockT = document.createElement('template');
dockT.innerHTML = `
<style>
  :host { display: block; height: 20px; flex: none; font: 12px "DejaVu Sans", sans-serif; color: #2a2a2a; }
  .bar { display: flex; align-items: center; height: 18px; }
  .t { flex: 1; white-space: nowrap; }
  .b { border: 1px solid #777; border-radius: 2px; margin-left: 3px; box-sizing: border-box; width: 11px; height: 11px; position: relative; }
  .f::after { content: ""; position: absolute; left: 3px; top: 1px; width: 4px; height: 4px; border: 1px solid #666; }
  .x { background: linear-gradient(45deg, transparent 44%, #333 44%, #333 56%, transparent 56%), linear-gradient(-45deg, transparent 44%, #333 44%, #333 56%, transparent 56%); }
</style>
<div class="bar"><span class="t"><slot></slot></span><span class="b f"></span><span class="b x"></span></div>`;
class QDockTitle extends HTMLElement {
  constructor() { super(); this.attachShadow({ mode: 'open' }).appendChild(dockT.content.cloneNode(true)); }
}
customElements.define('q-dock-title', QDockTitle);

const gripT = document.createElement('template');
gripT.innerHTML = `<style>
  :host { display: flex; align-items: center; justify-content: center; width: 6px; flex: none; }
  i { display: block; width: 3px; height: 18px; background: radial-gradient(circle at 1px 1px, #bdbdbd .8px, transparent 1px) 0 0 / 3px 3px; }
</style><i></i>`;
class QSplitter extends HTMLElement {
  constructor() { super(); this.attachShadow({ mode: 'open' }).appendChild(gripT.content.cloneNode(true)); }
}
customElements.define('q-splitter', QSplitter);

class QCheck extends HTMLElement {
  connectedCallback() {
    if (this.shadowRoot) return;
    this.attachShadow({ mode: 'open' }).innerHTML = `<style>
      :host { display: block; width: 14px; height: 14px; flex: none; box-sizing: border-box; background: #fff; border: 1px solid #bbb; position: relative; }
      svg { position: absolute; left: 1px; top: 1px; }
    </style>${this.hasAttribute('on') ? '<svg width="10" height="10" viewBox="0 0 10 10"><path d="M1.5 5.5L4 9 8.5 1" fill="none" stroke="#111" stroke-width="1.7"/></svg>' : ''}`;
  }
}
customElements.define('q-check', QCheck);

class QLayerRow extends HTMLElement {
  connectedCallback() {
    if (this.shadowRoot) return;
    const a = n => this.getAttribute(n);
    const level = +(a('level') || 0);
    const arrow = a('arrow');
    const check = a('check');
    this.attachShadow({ mode: 'open' }).innerHTML = `<style>
      :host { display: flex; align-items: center; height: 18px; width: 254px; padding-left: ${level * 20}px; box-sizing: border-box; position: relative; white-space: nowrap; font: 12px "DejaVu Sans", sans-serif; color: #333; }
      :host([bold]) { font-weight: bold; color: #000; }
      :host([off]) { font-style: italic; color: #8a8a8a; }
      :host([selected]) { background: #308cc6; color: #fff; }
      :host([selected]) .l { text-decoration: underline; }
      :host::after { content: ""; position: absolute; right: 0; top: 0; bottom: 1px; width: 4px; background: #eeeeee; }
      :host([selected])::after { background: #fff; }
      .ar { width: 20px; height: 18px; margin-right: 3px; flex: none; display: flex; align-items: center; justify-content: center; }
      .open { border: 4px solid transparent; border-top: 5px solid #555; border-bottom: 0; }
      .closed { border: 4px solid transparent; border-left: 5px solid #555; border-right: 0; }
      :host([selected]) .closed { border-left-color: #1f3a52; }
      q-check { margin-right: 6px; }
      q-icon { margin-right: 7px; }
    </style>
    <span class="ar">${arrow ? `<i class="${arrow}"></i>` : ''}</span>
    ${check === null ? '' : `<q-check ${check === 'on' ? 'on' : ''}></q-check>`}
    <q-icon name="${a('icon')}" size="16"></q-icon><span class="l"><slot></slot></span>`;
  }
}
customElements.define('q-layer-row', QLayerRow);

const layerT = document.createElement('template');
layerT.innerHTML = `
<style>
  :host { display: flex; width: 264px; flex: none; box-sizing: border-box; background: #eeeeee; }
  .col { flex: 1; min-width: 0; display: flex; flex-direction: column; padding-left: 1.5px; }
  q-dock-title { margin: 0 2.5px 0 4.5px; }
  .tools { display: flex; align-items: center; height: 25px; margin-bottom: 4px; padding-left: 8.5px; }
  .tools .tri { border: 4px solid transparent; border-top: 5px solid #555; border-bottom: 0; }
  .tree { flex: 1; min-height: 0; background: #fff; border: 1px solid #c2c2c2; box-sizing: border-box; width: 256px; }
  .tabs { display: flex; height: 24px; flex: none; align-items: flex-start; border-top: 1px solid #c8c8c8; margin: 2px 0 0 0; width: 256px; }
  .tab { display: flex; align-items: center; justify-content: center; box-sizing: border-box; height: 22px; font-size: 12px; color: #2a2a2a; }
  .b { width: 73px; background: #dcdcdc; border: 1px solid #c2c2c2; border-top: 0; border-radius: 0 0 3px 3px; }
  .l { width: 57px; height: 24px; background: #f6f6f6; border: 1px solid #c2c2c2; border-top: 0; border-radius: 0 0 3px 3px; margin-top: -1px; }
</style>
<div class="col">
  <q-dock-title>Layer</q-dock-title>
  <div class="tools">
    <q-icon name="brush" size="18" vb="24"></q-icon>
    <q-icon name="addgroup" size="18" vb="20" style="margin-left:6px"></q-icon>
    <q-icon name="eye" size="18" vb="20" style="margin-left:8px"></q-icon>
    <q-icon name="filter" size="18" vb="20" style="margin-left:6px"></q-icon>
    <q-icon name="epsilon" size="18" vb="20" style="margin-left:8px"></q-icon><span class="tri" style="margin-left:4px"></span>
    <q-icon name="expand" size="18" vb="20" style="margin-left:7px"></q-icon>
    <q-icon name="collapse" size="18" vb="20" style="margin-left:6px"></q-icon>
    <q-icon name="removelayer" size="18" vb="20" style="margin-left:7px"></q-icon>
  </div>
  <div class="tree"><slot></slot></div>
  <div class="tabs"><div class="tab b">Browser</div><div class="tab l">Layer</div></div>
</div>
<q-splitter></q-splitter>`;
class QLayerPanel extends HTMLElement {
  constructor() { super(); this.attachShadow({ mode: 'open' }).appendChild(layerT.content.cloneNode(true)); }
}
customElements.define('q-layer-panel', QLayerPanel);

const canvasT = document.createElement('template');
canvasT.innerHTML = `
<style>
  :host { display: block; width: 1006px; flex: none; background: #fff; border: 1px solid #c2c2c2; border-top: 0; box-sizing: border-box; position: relative; overflow: hidden; }
  svg { display: block; }
  text { font: 13px "DejaVu Sans", sans-serif; paint-order: stroke; stroke: #fff; stroke-width: 3px; stroke-linejoin: round; fill: #111; }
</style>
<svg width="1004" height="877" viewBox="303 133 1004 877">
  <path d="M642.3 153.7L868.8 988.2 361.2 868.2 1248.4 695.5Z" fill="#b7c8ef" stroke="#23242e" stroke-width="1" fill-rule="nonzero"/>
  <text x="853" y="548">SF 028A07799</text>
</svg>`;
class QMapCanvas extends HTMLElement {
  constructor() { super(); this.attachShadow({ mode: 'open' }).appendChild(canvasT.content.cloneNode(true)); }
}
customElements.define('q-map-canvas', QMapCanvas);

const pushT = document.createElement('template');
pushT.innerHTML = `<style>
  :host { display: flex; align-items: center; box-sizing: border-box; height: 22px; background: linear-gradient(#fafafa, #eeeeee); border: 1px solid #bdbdbd; border-radius: 3px; font: 12px "DejaVu Sans", sans-serif; color: #222; white-space: nowrap; padding-left: 2px; gap: 2px; }
  :host([nav]) { width: 23px; justify-content: center; padding: 0; }
</style><slot></slot>`;
class QPushButton extends HTMLElement {
  constructor() { super(); this.attachShadow({ mode: 'open' }).appendChild(pushT.content.cloneNode(true)); }
}
customElements.define('q-push-button', QPushButton);

const valT = document.createElement('template');
valT.innerHTML = `
<style>
  :host { display: flex; width: 612px; flex: none; box-sizing: border-box; background: #eeeeee; font: 12px "DejaVu Sans", sans-serif; }
  q-splitter { width: 4px; }
  .col { flex: 1; min-width: 0; display: flex; flex-direction: column; padding-left: 6px; }
  q-dock-title { margin-right: 2px; }
  .btns { display: flex; justify-content: space-between; align-items: center; margin: 7px 16px 8px 12px; height: 22px; flex: none; }
  .mid { display: flex; gap: 7px; }
  .nav { width: 0; height: 0; border: 3px solid transparent; opacity: .6; }
  .prev { border-right: 4px solid #999; border-left: 0; }
  .next { border-left: 4px solid #999; border-right: 0; }
  .list { flex: 1; min-height: 0; margin: 0 10px 0 5.5px; background: #fff; border: 1px solid #bdbdbd; display: flex; flex-direction: column; position: relative; }
  .rows { flex: 1; min-height: 0; overflow: hidden; }
  .row { display: flex; align-items: center; height: 25px; background: #308cc6; color: #e4eef6; white-space: nowrap; overflow: hidden; }
  .ic { width: 30px; height: 25px; flex: none; display: flex; align-items: center; justify-content: center; border-right: 1px solid #5aa3d2; box-sizing: border-box; }
  .row span { padding-left: 3px; }
  .sb { display: flex; align-items: center; height: 12px; flex: none; border-top: 1px solid #c4c4c4; background: #d8d8d8; }
  .sb .a { width: 12px; height: 12px; display: flex; align-items: center; justify-content: center; background: #eeeeee; flex: none; }
  .sb .thumb { width: 472px; height: 12px; flex: none; background: linear-gradient(#f2f2f2, #e8e8e8); border-right: 1px solid #c4c4c4; }
  .sb .fill { flex: 1; }
  .al { border: 3px solid transparent; border-right: 4px solid #333; border-left: 0; }
  .ar { border: 3px solid transparent; border-left: 4px solid #333; border-right: 0; }
  .msg { height: 31px; flex: none; display: flex; align-items: center; padding-left: 4.5px; font-weight: bold; color: #111; white-space: nowrap; }
  .cursor { position: absolute; left: 155px; top: 17px; }
</style>
<q-splitter></q-splitter>
<div class="col">
  <q-dock-title>Validazione Geometria</q-dock-title>
  <div class="btns">
    <q-push-button nav><i class="nav prev"></i></q-push-button>
    <div class="mid">
      <q-push-button style="width:152px"><q-icon name="mag16" size="16"></q-icon>Zoom agli Elementi</q-push-button>
      <q-push-button style="width:146px"><q-icon name="mag16" size="16"></q-icon>Zoom Al Problema</q-push-button>
    </div>
    <q-push-button nav><i class="nav next"></i></q-push-button>
  </div>
  <div class="list">
    <div class="rows">
      <div class="row"><div class="ic"><q-icon name="hourglass" size="24"></q-icon></div><span>nextval('sf_id_seq'::regclass): i segmenti 0 e 2 della linea 0 si intersecano in 1711437.23894</span></div>
    </div>
    <div class="sb"><div class="a"><i class="al"></i></div><div class="thumb"></div><div class="fill"></div><div class="a"><i class="ar"></i></div></div>
    <svg class="cursor" width="14" height="19" viewBox="0 0 14 19"><path d="M1 1V15.5L4.5 12.5 7 18 9.5 17 7 11.5 11.5 11Z" fill="#f4f4f4" stroke="#222" stroke-width="1.1"/></svg>
  </div>
  <div class="msg">i segmenti 0 e 2 della linea 0 si intersecano in 1711437.23894, 4875838.53437</div>
</div>`;
class QValidationPanel extends HTMLElement {
  constructor() { super(); this.attachShadow({ mode: 'open' }).appendChild(valT.content.cloneNode(true)); }
}
customElements.define('q-validation-panel', QValidationPanel);

const statusT = document.createElement('template');
statusT.innerHTML = `
<style>
  :host { display: flex; align-items: center; height: 30px; flex: none; background: #eeeeee; font: 9px "DejaVu Sans", sans-serif; color: #333; white-space: nowrap; }
  .field { display: flex; align-items: center; box-sizing: border-box; height: 22px; background: #fff; border: 1px solid #bdbdbd; border-radius: 3px; flex: none; position: relative; overflow: hidden; }
  .loc { width: 327px; margin-left: 5px; padding-left: 9px; font-size: 12px; color: #222; gap: 4px; height: 22px; }
  .loc q-icon:last-child { position: absolute; right: 8px; top: 5px; }
  .lb { flex: none; }
  .val { padding-left: 7px; }
  .spin { position: absolute; right: 0; top: 0; bottom: 0; width: 12px; border-left: 1px solid #ccc; background: #f0f0f0; display: flex; flex-direction: column; justify-content: center; align-items: center; gap: 2px; }
  .up { border: 3px solid transparent; border-bottom: 4px solid #555; border-top: 0; }
  .dn { border: 3px solid transparent; border-top: 4px solid #555; border-bottom: 0; }
  .combo { position: absolute; right: 0; top: 0; bottom: 0; width: 18px; border-left: 1px solid #ccc; background: #f0f0f0; display: flex; align-items: center; justify-content: center; }
  q-check { width: 13px; height: 13px; }
</style>
<div class="field loc"><q-icon name="magsmall" size="14"></q-icon><span>suolo</span><q-icon name="clear" size="13"></q-icon></div>
<span class="lb" style="margin-left:667px;width:50px">Coordinata</span>
<div class="field val" style="margin-left:3px;width:128px">1711470.91,4875874.83</div>
<q-icon name="render" size="18" vb="18" style="margin:0 13px 0 2px"></q-icon>
<span class="lb" style="width:24px">Scala</span>
<div class="field val" style="margin-left:4px;width:96px">1:267<div class="combo"><i class="dn"></i></div></div>
<q-icon name="lock" size="16" style="margin:0 7px 0 10px"></q-icon>
<span class="lb" style="width:102px">Lente d'ingrandimento</span>
<div class="field val" style="margin-left:4px;width:90px">100%<div class="spin"><i class="up"></i><i class="dn"></i></div></div>
<span class="lb" style="margin-left:10px;width:45px">Rotazione</span>
<div class="field val" style="margin-left:9px;width:91px">0.0 °<div class="spin"><i class="up"></i><i class="dn"></i></div></div>
<q-check on style="margin-left:7px"></q-check>
<span class="lb" style="margin-left:5px;width:44px">Visualizza</span>
<q-icon name="epsg" size="14" style="margin:0 4px 0 15px"></q-icon>
<span class="lb" style="width:49px">EPSG:3003</span>
<q-icon name="msg" size="16" style="margin-left:25px"></q-icon>`;
class QStatusbar extends HTMLElement {
  constructor() { super(); this.attachShadow({ mode: 'open' }).appendChild(statusT.content.cloneNode(true)); }
}
customElements.define('q-statusbar', QStatusbar);

const appT = document.createElement('template');
appT.innerHTML = `
<style>
  :host { display: flex; flex-direction: column; width: 1920px; height: 1040px; font: 12px "DejaVu Sans", sans-serif; }
  .main { display: flex; flex: 1; min-height: 0; }
</style>
<q-titlebar>progetto_definitivo - QGIS [rt]</q-titlebar>
<q-menubar>
  <q-menu-item><u>P</u>rogetto</q-menu-item><q-menu-item><u>M</u>odifica</q-menu-item><q-menu-item><u>V</u>isualizza</q-menu-item>
  <q-menu-item><u>L</u>ayer</q-menu-item><q-menu-item><u>I</u>mpostazioni</q-menu-item><q-menu-item><u>P</u>lugins</q-menu-item>
  <q-menu-item>Vett<u>o</u>re</q-menu-item><q-menu-item><u>R</u>aster</q-menu-item><q-menu-item><u>D</u>atabase</q-menu-item>
  <q-menu-item><u>W</u>eb</q-menu-item><q-menu-item><u>M</u>esh</q-menu-item><q-menu-item>Pro<u>c</u>essing</q-menu-item><q-menu-item><u>G</u>uida</q-menu-item>
</q-menubar>
<q-toolbar>
  <q-handle w="12.5"></q-handle>
  <q-btn icon="new"></q-btn><q-btn icon="open"></q-btn><q-btn icon="save"></q-btn><q-btn icon="layout"></q-btn><q-btn icon="manager"></q-btn><q-btn icon="style"></q-btn>
  <q-handle w="16"></q-handle>
  <q-btn icon="pan"></q-btn><q-btn icon="panto"></q-btn><q-btn icon="zoomin"></q-btn><q-btn icon="zoomout"></q-btn><q-btn icon="zoomfull"></q-btn><q-btn icon="zoomlayer"></q-btn><q-btn icon="zoomsel"></q-btn>
  <q-btn icon="zoom11" disabled></q-btn><q-btn icon="zoomlast"></q-btn><q-btn icon="zoomnext" disabled></q-btn><q-btn icon="newmap"></q-btn><q-btn icon="bookmark"></q-btn><q-btn icon="showbm"></q-btn><q-btn icon="refresh"></q-btn>
  <q-handle w="15"></q-handle>
  <q-btn icon="identify"></q-btn><q-btn icon="action" dd></q-btn><q-btn icon="select" dd></q-btn><q-btn icon="selattr" dd></q-btn><q-btn icon="deselect" w="31"></q-btn><q-btn icon="table"></q-btn><q-btn icon="abacus"></q-btn><q-btn icon="gear"></q-btn><q-btn icon="sigma"></q-btn>
  <q-btn icon="ruler" dd></q-btn><q-btn icon="annot"></q-btn><q-btn icon="ttext" dd></q-btn>
</q-toolbar>
<q-toolbar last>
  <q-handle w="12.5"></q-handle>
  <q-btn icon="pencils"></q-btn><q-btn icon="pencil" pressed></q-btn><q-btn icon="saveedits"></q-btn><q-btn icon="addpoly"></q-btn><q-btn icon="vertex" pressed></q-btn><q-dd-button></q-dd-button>
  <q-handle w="1"></q-handle>
  <q-btn icon="modattr" disabled></q-btn><q-btn icon="del" disabled></q-btn><q-btn icon="cut" disabled></q-btn><q-btn icon="copy" disabled></q-btn><q-btn icon="paste"></q-btn><q-btn icon="undo"></q-btn><q-btn icon="redo" disabled></q-btn>
  <q-handle w="15"></q-handle>
  <q-btn icon="abc"></q-btn><q-btn icon="diagram"></q-btn><q-sep w="5"></q-sep><q-btn icon="abpin"></q-btn><q-btn icon="abcred"></q-btn><q-sep w="9"></q-sep>
  <q-btn icon="abpiny"></q-btn><q-btn icon="abceye"></q-btn><q-btn icon="abcarrow"></q-btn><q-btn icon="abcrotate"></q-btn><q-btn icon="abcpen"></q-btn>
  <q-handle w="16"></q-handle><q-btn icon="globe"></q-btn><q-handle w="16"></q-handle><q-btn icon="python"></q-btn><q-btn icon="reload" dd></q-btn>
  <q-handle w="15"></q-handle><q-btn icon="help"></q-btn><q-handle w="17"></q-handle><q-handle w="16"></q-handle>
  <q-btn icon="boxdown"></q-btn><q-btn icon="boxup"></q-btn><q-btn icon="tools"></q-btn>
</q-toolbar>
<div class="main">
  <q-side-toolbar>
    <q-icon name="addlayers" size="24" vb="26"></q-icon><q-icon name="newgpkg" size="24" vb="26"></q-icon><q-icon name="newvector" size="24" vb="26"></q-icon><q-icon name="feather" size="24" vb="26"></q-icon><q-icon name="memory" size="24" vb="26"></q-icon>
    <q-sep horizontal></q-sep>
    <q-icon name="virtual" size="24" vb="26"></q-icon>
  </q-side-toolbar>
  <q-layer-panel>
    <q-layer-row arrow="open" check="on" icon="group">base</q-layer-row>
    <q-layer-row level="1" check="on" icon="dash" bold>viab</q-layer-row>
    <q-layer-row level="1" check="on" icon="dot" bold>emer</q-layer-row>
    <q-layer-row level="1" check="on" icon="squarered" bold>comuni</q-layer-row>
    <q-layer-row arrow="open" check="on" icon="group">piani</q-layer-row>
    <q-layer-row level="1" icon="layertable" bold>sfb</q-layer-row>
    <q-layer-row level="1" icon="layertable" bold>sfap</q-layer-row>
    <q-layer-row level="1" icon="layertable" bold>sfal</q-layer-row>
    <q-layer-row level="1" check="off" icon="squarepale" bold off>pf</q-layer-row>
    <q-layer-row level="1" arrow="closed" check="on" icon="rulebased" bold selected>sf</q-layer-row>
    <q-layer-row arrow="open" check="on" icon="group">interventi</q-layer-row>
    <q-layer-row level="1" check="on" icon="squareorange" bold>int</q-layer-row>
    <q-layer-row level="1" icon="layertable" bold>intf</q-layer-row>
    <q-layer-row level="1" icon="layertable" bold>intap</q-layer-row>
    <q-layer-row icon="layertable" bold>piani</q-layer-row>
    <q-layer-row arrow="closed" check="on" icon="group">lookup tabels</q-layer-row>
  </q-layer-panel>
  <q-map-canvas></q-map-canvas>
  <q-validation-panel></q-validation-panel>
</div>
<q-statusbar></q-statusbar>`;
class QgisApp extends HTMLElement {
  constructor() { super(); this.attachShadow({ mode: 'open' }).appendChild(appT.content.cloneNode(true)); }
}
customElements.define('qgis-app', QgisApp);
</script>
</body>
</html>
